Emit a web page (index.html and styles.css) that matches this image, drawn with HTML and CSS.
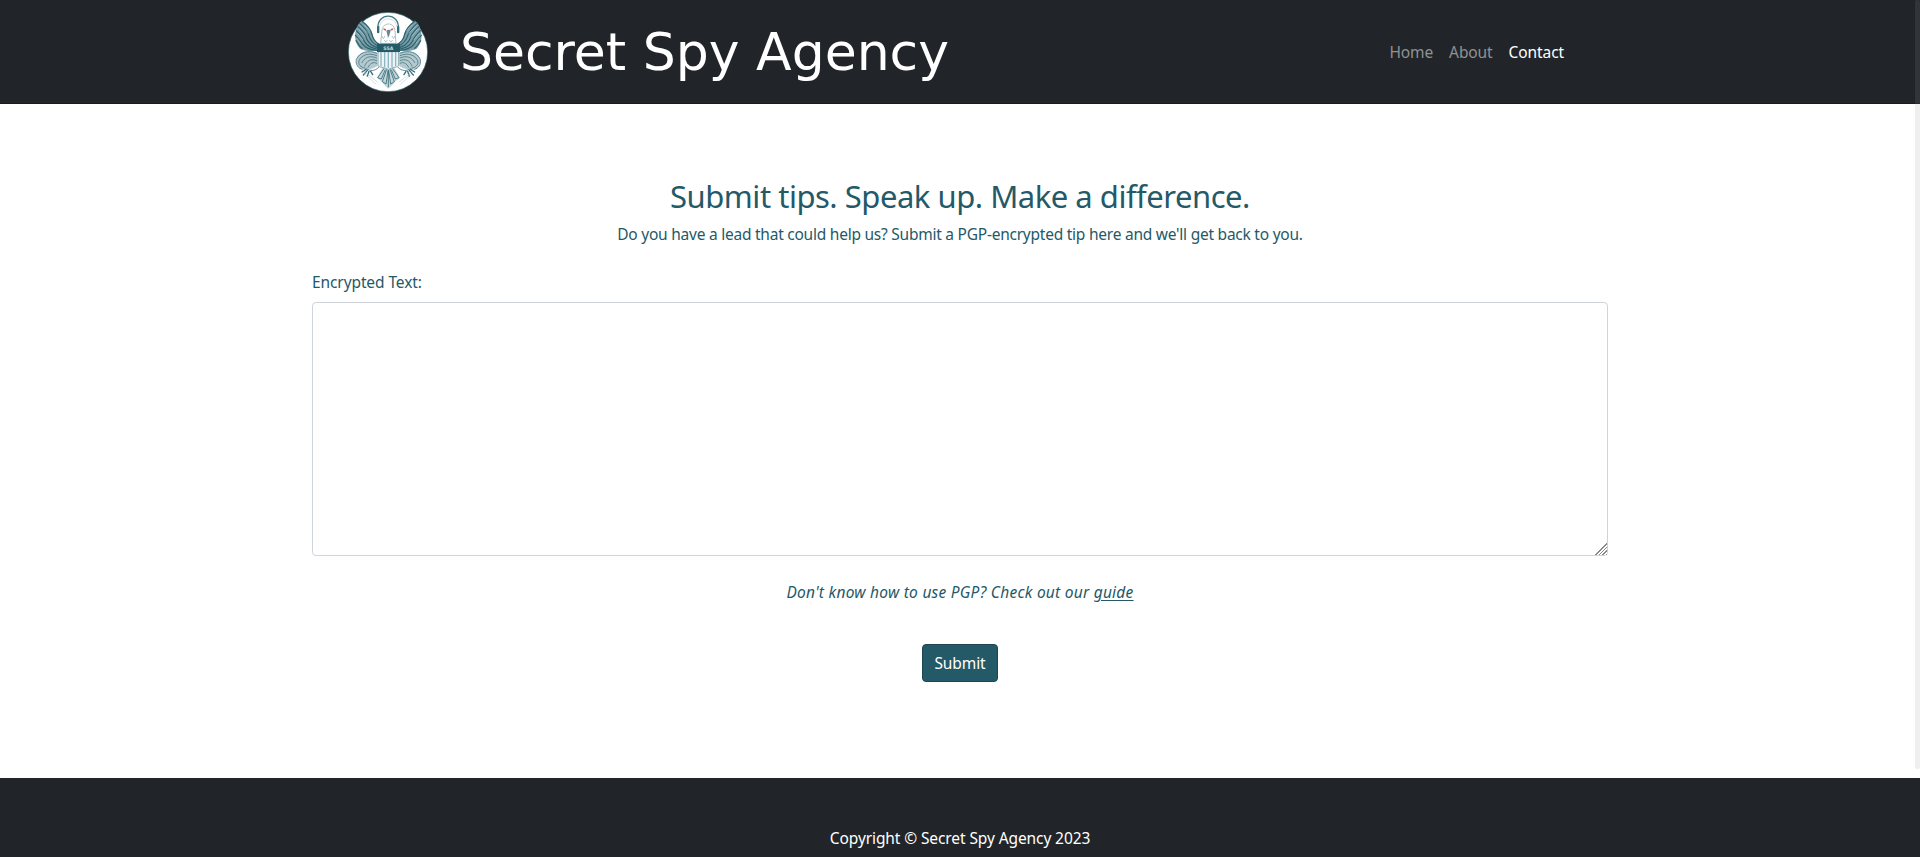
FILE: index.html
```html
<!DOCTYPE html>
<html lang="en">
<head>
<meta charset="utf-8">
<title>Secret Spy Agency</title>
<link rel="stylesheet" href="styles.css">
</head>
<body>
<header class="navbar">
  <div class="navbar-inner">
    <a class="brand" href="#">
      <svg class="seal" viewBox="24 24 240 240" aria-hidden="true">
        <defs>
          <g id="half">
            <path d="M65 50C78 58 92 72 98 90C100 104 106 114 116 120V140C96 142 72 142 60 134C48 122 44 106 46 88C48 72 54 58 65 50Z" fill="#7b9fa9"/>
            <g fill="none" stroke="#2c616e" stroke-width="3.5" stroke-linecap="round">
              <path d="M65 51C80 62 92 74 96 92C99 106 106 114 117 121"/>
              <path d="M59 58C72 70 84 82 88 98C92 110 102 120 114 126"/>
              <path d="M54 68C65 78 76 90 80 104C86 118 98 126 112 131"/>
              <path d="M49 80C59 90 68 100 73 112C80 124 94 132 110 135"/>
              <path d="M46 94C54 102 60 110 66 118C74 130 90 137 110 139"/>
              <path d="M48 110C54 118 58 128 66 133"/>
            </g>
            <path d="M112 146C92 138 68 142 56 154C46 166 48 184 60 194C74 200 98 196 112 186Z" fill="#b5cace"/>
            <g fill="none" stroke="#4b7a86" stroke-width="2.6" stroke-linecap="round">
              <path d="M110 148C84 136 58 146 49 166C46 182 54 192 66 196"/>
              <path d="M110 155C86 144 64 154 57 170C54 182 62 190 74 192"/>
              <path d="M110 162C88 152 72 162 66 176"/>
              <path d="M110 170C94 162 80 170 74 186"/>
              <path d="M110 178C100 172 90 178 84 190"/>
              <path d="M116 190C104 202 92 202 78 194"/>
            </g>
            <g fill="none" stroke="#356b78" stroke-width="4" stroke-linecap="round">
              <path d="M78 196L66 204M82 199L70 213M87 202L82 217M92 202L98 212"/>
              <path d="M66 196L112 234M72 208L108 240" stroke="#a9c1c7" stroke-width="1.5"/>
            </g>
            <g fill="none" stroke="#f3f7f8" stroke-width="1">
              <path d="M60 64L84 88M55 74L76 98M51 87L69 108M50 101L62 118M72 62L92 82"/>
            </g>
          </g>
        </defs>
        <circle cx="144" cy="144" r="119" fill="#fff" stroke="#245967" stroke-width="2"/>
        <use href="#half"/>
        <use href="#half" transform="matrix(-1 0 0 1 290 0)"/>
        <path d="M128 190L145 198L162 190L180 222L166 232L158 242L145 254L132 242L124 232L111 222Z" fill="#c5d6da"/>
        <path d="M132 194L113 221L124 225L136 197M140 196L127 233L138 240L144 200M158 194L177 221L166 225L154 197M150 196L163 233L152 240L146 200M145 198V250" fill="none" stroke="#356b78" stroke-width="2.5"/>
        <path d="M126 78C128 66 136 60 145 60C156 60 163 67 165 80L168 118H122Z" fill="#fff" stroke="#7fa3ac" stroke-width="2"/>
        <path d="M125 96l5 8 5-8M132 108l5 6 5-6M156 96l5 8 4-8M148 108l5 6 5-6" fill="none" stroke="#8eabb3" stroke-width="2"/>
        <path d="M139 80C142 76 150 76 152 80L148 94L144 102L142 92Z" fill="#688994"/>
        <path d="M130 73l8 2v5l-7-2zM160 73l-8 2v5l7-2z" fill="#ec5058"/>
        <path d="M114 74C110 24 179 24 175 74" fill="none" stroke="#4a7783" stroke-width="4"/>
        <path d="M119 68C122 37 167 37 170 68" fill="none" stroke="#b8cbd0" stroke-width="2"/>
        <rect x="111" y="66" width="7" height="22" rx="3" fill="#356b78"/>
        <rect x="171" y="66" width="7" height="22" rx="3" fill="#356b78"/>
        <path d="M114 143H176V184C176 191 158 188 145 197C132 188 114 191 114 184Z" fill="#edf3f6" stroke="#53808b" stroke-width="2"/>
        <path d="M123 144V187M134 144V189M145 144V193M156 144V189M167 144V187" stroke="#8fb6c2" stroke-width="4"/>
        <path d="M111 119H180V144H111Z" fill="#245967"/>
        <text class="seal-text" x="145" y="138" text-anchor="middle">SSA</text>
      </svg>
      <span class="brand-name">Secret Spy Agency</span>
    </a>
    <nav class="nav">
      <a class="nav-link" href="#">Home</a>
      <a class="nav-link" href="#">About</a>
      <a class="nav-link active" href="#">Contact</a>
    </nav>
  </div>
</header>
<main class="container">
  <h2 class="title">Submit tips. Speak up. Make a difference.</h2>
  <p class="lead">Do you have a lead that could help us? Submit a PGP-encrypted tip here and we'll get back to you.</p>
  <form class="tip-form">
    <label class="label" for="tip">Encrypted Text:</label>
    <textarea class="textarea" id="tip"></textarea>
    <p class="help">Don't know how to use PGP? Check out our <a class="guide" href="#">guide</a></p>
    <button class="submit" type="button">Submit</button>
  </form>
</main>
<footer class="footer"><p class="copyright">Copyright © Secret Spy Agency 2023</p></footer>
<div class="scroll-track"></div>
</body>
</html>
```
FILE: styles.css
```css
* { box-sizing: border-box; }
html { overflow: hidden; }
body {
  margin: 0;
  height: 857px;
  display: flex;
  flex-direction: column;
  overflow: hidden;
  background: #fff;
  color: #245967;
  font: 15.5px/24px "Noto Sans", sans-serif;
  letter-spacing: -0.1px;
}
h2, p { margin: 0; font-weight: 400; }
.navbar { height: 104px; flex: none; background: #212529; border-bottom: 1px solid #1c1820; }
.navbar-inner {
  width: 1320px;
  height: 103px;
  margin: 0 auto;
  padding: 0 48px;
  display: flex;
  align-items: center;
  justify-content: space-between;
}
.brand { display: flex; align-items: center; gap: 32px; color: #fff; text-decoration: none; }
.seal { width: 80px; height: 80px; display: block; }
.seal-text { font: 700 14px "DejaVu Sans", sans-serif; letter-spacing: 0; fill: #c5d7db; }
.brand-name { font: 52px/78px "DejaVu Sans", sans-serif; letter-spacing: 0; }
.nav { display: flex; }
.nav-link { padding: 8px; color: #909294; text-decoration: none; }
.nav-link.active { color: #fff; }
.container { width: 1320px; height: 674px; flex: none; margin: 0 auto; padding: 73px 12px 0; }
.title { font-size: 31px; line-height: 38px; letter-spacing: -0.48px; text-align: center; }
.lead { margin-top: 7px; letter-spacing: -0.24px; text-align: center; }
.tip-form { display: flex; flex-direction: column; padding-top: 24px; }
.label { height: 24px; }
.textarea {
  width: 100%;
  height: 254px;
  margin-top: 8px;
  padding: 6px 12px;
  border: 1px solid #ced4da;
  border-radius: 4px;
  background: #fff;
  resize: vertical;
}
.textarea::-webkit-resizer {
  background:
    linear-gradient(135deg, #fff 55%, transparent 55%),
    repeating-linear-gradient(135deg, #888 0 1px, #fff 1px 2.5px);
}
.help { margin-top: 24px; letter-spacing: 0.25px; text-align: center; font-style: italic; }
.guide { color: inherit; text-underline-offset: 2px; }
.submit {
  align-self: center;
  width: 76px;
  height: 38px;
  margin-top: 40px;
  padding: 0;
  border: 1px solid #1d4753;
  border-radius: 4px;
  background: #245967;
  color: #fff;
  font: inherit;
  letter-spacing: inherit;
}
.footer { flex: 1; padding-top: 48px; background: #212529; color: #fff; text-align: center; }
.scroll-track {
  position: absolute;
  top: 0;
  right: 0;
  width: 5px;
  height: 769px;
  border-radius: 2px;
  background: rgba(150, 150, 150, 0.15);
}
```
